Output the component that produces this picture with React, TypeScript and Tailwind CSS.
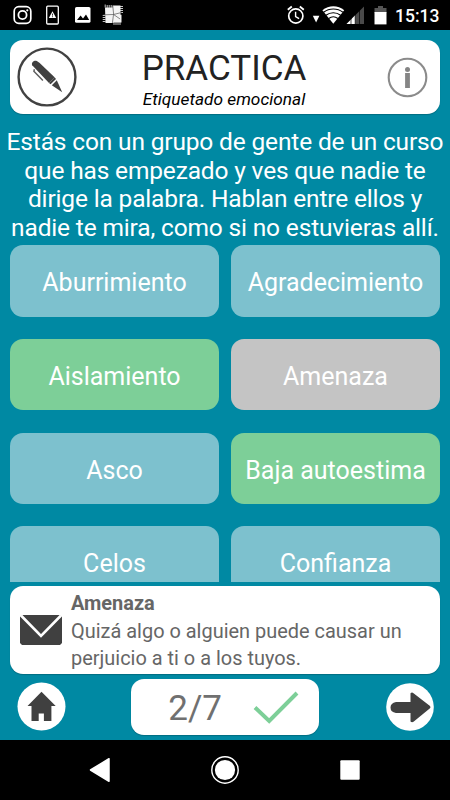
type Tone = "blue" | "green" | "gray";

interface Emotion {
    label: string;
    tone: Tone;
}

const emotions: Emotion[] = [
    { label: "Aburrimiento", tone: "blue" },
    { label: "Agradecimiento", tone: "blue" },
    { label: "Aislamiento", tone: "green" },
    { label: "Amenaza", tone: "gray" },
    { label: "Asco", tone: "blue" },
    { label: "Baja autoestima", tone: "green" },
    { label: "Celos", tone: "blue" },
    { label: "Confianza", tone: "blue" },
];

const tones: Record<Tone, string> = {
    blue: "bg-[#7dc1ce]",
    green: "bg-[#7dcf98]",
    gray: "bg-[#c4c4c4]",
};

function StatusBar() {
    return (
        <div className="h-[30px] shrink-0 bg-black flex items-center justify-between">
            <svg width="150" height="30" viewBox="0 0 150 30" fill="none">
                <rect x="14.2" y="6.7" width="16.6" height="16.6" rx="4.6" stroke="#fff" strokeWidth="1.7" />
                <circle cx="22.5" cy="15" r="4.1" stroke="#fff" strokeWidth="1.8" />
                <circle cx="27.3" cy="10.3" r="1.1" fill="#fff" />
                <rect x="46.7" y="6.2" width="11.6" height="17.8" rx="1" stroke="#fff" strokeWidth="1.3" />
                <path d="M52.5 11.2l3.7 6.8h-7.4z" fill="#fff" />
                <path d="M52.5 13.6v2M52.5 16.3v.9" stroke="#000" strokeWidth=".8" />
                <rect x="75" y="7" width="15.5" height="15.8" rx="1.6" fill="#fff" />
                <path d="M77 20l3.6-4.5 2.4 2.9 3-4 3.2 5.6z" fill="#000" />
                <path d="M105 7.5h7.5v-2h8v9.3h1v7.7h-8v.5h-8z" fill="#f4f4f4" />
                <path d="M105.2 4.5v3M107.2 5v3M109.2 5v3M111.2 5v3M123 6.5h-3M123 8.5h-3M123 10.5h-3M123 12.5h-3M102.7 15.5h3M102.7 17.5h3M102.7 19.5h3M102.7 21.5h3M114 22v3M116 22v3M118 22v3M120 22v3" stroke="#ddd" strokeWidth=".9" />
                <path d="M112.8 6l.8 8-1.2 9M103.5 14.8l10-.3 8-2M113.6 14.5l6.5 4.5" stroke="#555" strokeWidth=".7" />
            </svg>
            <div className="flex items-center">
                <svg width="112" height="30" viewBox="283 0 112 30" fill="none">
                    <circle cx="295.8" cy="16" r="7.1" stroke="#fff" strokeWidth="1.7" />
                    <path d="M295.6 11.8v4.7l3.5 2.2" stroke="#fff" strokeWidth="1.4" />
                    <path d="M287.8 9.8l4-3.3M303.8 9.8l-4-3.3" stroke="#fff" strokeWidth="1.8" />
                    <path d="M312.8 15.8h6.6l-3.3 6.6z" fill="#fff" />
                    <path d="M322.4 10.2C328.8 4.9 338 4.9 344.2 10.2L333.3 23.7z" fill="#fff" />
                    <path d="M323.6 12.3c5.7-4.5 13.7-4.5 19.4 0M326 15.2c4.3-3.3 10.3-3.3 14.6 0M328.7 18.5c2.7-2 6.5-2 9.2 0" stroke="#000" strokeWidth="1.1" />
                    <path d="M364 6.5V24h-17.5z" fill="#4a4a4a" />
                    <path d="M355.2 15.3V24h-8.7z" fill="#fff" />
                    <path d="M351 10v14M355.2 8v16M359.5 6v18" stroke="#000" strokeWidth=".7" />
                    <path d="M378 6h5v2h3.5v5h-12V8h3.5z" fill="#555" />
                    <path d="M374.5 12h12v12.4h-12z" fill="#fff" />
                </svg>
                <span className="w-[55px] text-[17.5px] leading-[30px] text-white font-medium whitespace-nowrap pt-[2px]">15:13</span>
            </div>
        </div>
    );
}

function Header() {
    return (
        <div className="h-[74px] bg-white rounded-[13px] flex items-center justify-between pl-[7px] pr-[12px] shadow-[0_1px_1px_rgba(0,0,0,0.2)]">
            <svg width="60" height="60" viewBox="0 0 60 60" fill="none">
                <circle cx="30" cy="30" r="28.4" stroke="#424242" strokeWidth="2.4" />
                <path d="M15.2 18.2c-1.2-2.7 1.8-5.4 4.6-4.2l2.6 1.8 15.2 14.5-5.6 5.6z" fill="#404040" />
                <path d="M32 35.9l5.6-5.6 1.4 1.6-5.4 5.3z" fill="#404040" />
                <path d="M34.8 38.2l5-5 5.4 12z" fill="#404040" />
                <path d="M17.4 22.3l-.5 2 9 9.2" stroke="#606060" strokeWidth="1.5" />
            </svg>
            <div className="text-center text-black pr-[16px]">
                <h1 className="text-[35px] leading-[36px] text-[#222] pt-[6px]">PRACTICA</h1>
                <p className="text-[17.3px] leading-[20px] italic pt-[2px]">Etiquetado emocional</p>
            </div>
            <svg width="41" height="41" viewBox="0 0 41 41" fill="none">
                <circle cx="20.5" cy="20.5" r="18.8" stroke="#8b8b8b" strokeWidth="2.1" />
                <circle cx="20.5" cy="12.4" r="2.5" fill="#858585" />
                <path d="M20.5 16v15" stroke="#858585" strokeWidth="4.8" />
            </svg>
        </div>
    );
}

function EmotionButton({ label, tone }: Emotion) {
    return (
        <button className={`h-[71.5px] rounded-[13px] text-white text-[25px] text-center whitespace-nowrap pt-[4px] ${tones[tone]}`}>
            {label}
        </button>
    );
}

function NavBar() {
    return (
        <div className="h-[60px] shrink-0 bg-black flex justify-center">
            <svg width="450" height="60" viewBox="0 0 450 60" fill="none">
                <path d="M90.5 30L109 18.7v22.6z" fill="#fff" stroke="#fff" strokeLinejoin="round" strokeWidth="1.5" />
                <circle cx="225" cy="30" r="13.2" stroke="#fff" strokeWidth="1.4" />
                <circle cx="225" cy="30" r="10.1" fill="#fff" />
                <rect x="340.3" y="20.3" width="19.4" height="19.4" rx="1" fill="#fff" />
            </svg>
        </div>
    );
}

export default function App() {
    return (
        <div className="w-[450px] h-[800px] flex flex-col overflow-hidden bg-[#0089a3] font-[Roboto,sans-serif]">
            <StatusBar />
            <div className="flex-1 min-h-0 flex flex-col px-[10px] pt-[10px]">
                <Header />
                <p className="-mx-[10px] mt-[14px] h-[114px] text-center text-white text-[24.5px] tracking-[-0.16px] leading-[28.7px] whitespace-nowrap">
                    Estás con un grupo de gente de un curso<br />
                    que has empezado y ves que nadie te<br />
                    dirige la palabra. Hablan entre ellos y<br />
                    nadie te mira, como si no estuvieras allí.
                </p>
                <div className="mt-[3px] h-[336.5px] overflow-hidden">
                    <div className="grid grid-cols-2 gap-x-[12px] gap-y-[22.3px]">
                        {emotions.map((emotion) => (
                            <EmotionButton key={emotion.label} {...emotion} />
                        ))}
                    </div>
                </div>
                <div className="mt-[4.5px] h-[87.5px] shrink-0 bg-white rounded-[13px] flex items-center pl-[9px] shadow-[0_1px_1px_rgba(0,0,0,0.2)]">
                    <svg width="44" height="32" viewBox="0 0 44 32" fill="none">
                        <path d="M3 1h38l2 2v26l-2 2H3l-2-2V3z" fill="#404040" />
                        <path d="M2 1.5l20 20.5L42 1.5" stroke="#fff" strokeWidth="2.6" />
                    </svg>
                    <div className="pl-[8px] pt-[3px] text-[19.95px] leading-[27.5px] text-[#666] whitespace-nowrap">
                        <p className="font-bold">Amenaza</p>
                        <p>Quizá algo o alguien puede causar un</p>
                        <p>perjuicio a ti o a los tuyos.</p>
                    </div>
                </div>
                <div className="flex-1 flex items-center justify-between pl-[7px] pr-[6.5px]">
                    <svg width="49" height="49" viewBox="0 0 49 49">
                        <circle cx="24.5" cy="24.5" r="24" fill="#fff" />
                        <path d="M24.5 9.8L38.7 24H34.4v15h-7.5v-7.5h-5.2V39h-7.2V24h-4z" fill="#404040" />
                    </svg>
                    <div className="w-[188px] h-[56px] mr-[1px] bg-white rounded-[13px] flex items-center pl-[37px] shadow-[0_1px_1px_rgba(0,0,0,0.2)]">
                        <span className="w-[84px] text-[35px] leading-[40px] text-[#707070] pt-[4px]">2/7</span>
                        <svg width="48" height="36" viewBox="0 0 48 36" fill="none">
                            <path d="M3 18.5L17.2 32 45 4" stroke="#7dcf98" strokeWidth="4" />
                        </svg>
                    </div>
                    <svg width="48" height="48" viewBox="0 0 48 48">
                        <circle cx="24" cy="24" r="23.8" fill="#fff" />
                        <path d="M10 19h14.5v-8.8q1.5-1.2 3 0L44 23q1 1.2 0 2.3L27.5 38.8q-1.5 1.1-3-.3V30H10q-5.5-1-5.5-5.5T10 19z" fill="#404040" />
                    </svg>
                </div>
            </div>
            <NavBar />
        </div>
    );
}
